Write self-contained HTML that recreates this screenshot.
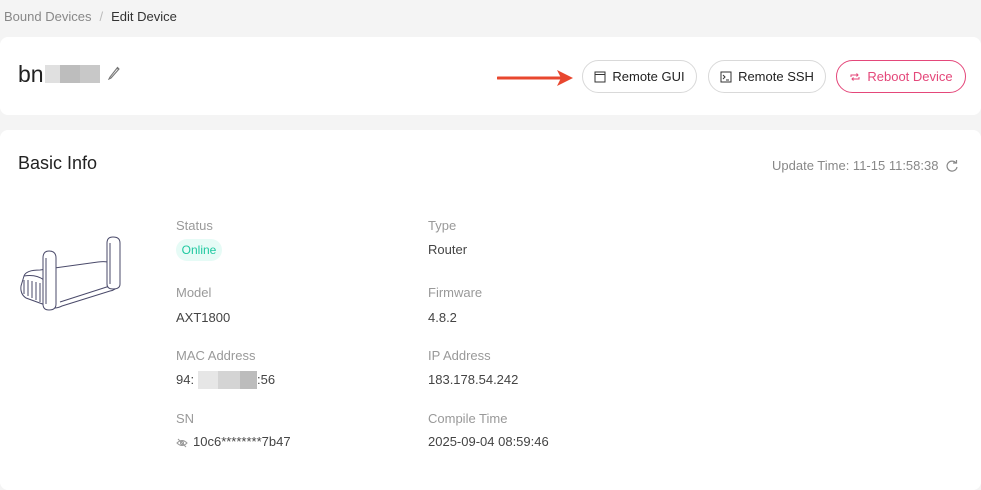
<!DOCTYPE html>
<html><head><meta charset="utf-8"><style>
*{box-sizing:border-box;margin:0;padding:0}
body{width:981px;height:473px;background:#f4f4f4;font-family:"Liberation Sans",sans-serif;position:relative;overflow:hidden;color:#333}
.bc{position:absolute;top:9px;left:4px;font-size:13px;color:#888}
.bc b{font-weight:normal;color:#333}
.bc i{font-style:normal;color:#bbb;margin:0 8px}
.c1{position:absolute;left:0;top:37px;width:981px;height:78px;background:#fff;border-radius:8px}
.c2{position:absolute;left:0;top:130px;width:981px;height:360px;background:#fff;border-radius:8px}
.abs{position:absolute}
.btn{position:absolute;top:60px;height:33px;border:1px solid #d9d9d9;border-radius:17px;font-size:13px;color:#222;display:flex;align-items:center;justify-content:center;gap:6px;background:#fff}
.lbl{position:absolute;font-size:13px;color:#999}
.val{position:absolute;font-size:13px;color:#444}
.blk{position:absolute;height:18px}
</style></head><body>
<div class="bc">Bound Devices<i>/</i><b>Edit Device</b></div>
<div class="c1"></div>
<div class="abs" style="left:18px;top:61px;font-size:23px;color:#222">bn</div>
<div class="blk" style="left:45px;top:65px;width:15px;background:#e0e0e0"></div>
<div class="blk" style="left:60px;top:65px;width:20px;background:#bdbdbd"></div>
<div class="blk" style="left:80px;top:65px;width:20px;background:#c8c8c8"></div>
<svg class="abs" style="left:107px;top:64px" width="14" height="16" viewBox="0 0 14 16"><path d="M3 13 L2 15 L4 14 L12 5 L10.5 3.5 Z M10 4 L11.5 5.5" fill="none" stroke="#777" stroke-width="1.1"/></svg>
<svg class="abs" style="left:497px;top:68px" width="80" height="20"><path d="M1 10 H66" stroke="#e8472f" stroke-width="3" stroke-linecap="round"/><path d="M60 2 L76 10 L60 18 L64 10 Z" fill="#e8472f"/></svg>
<div class="btn" style="left:582px;width:115px"><svg width="12" height="12"><rect x="1" y="1" width="10" height="10" fill="none" stroke="#333"/><path d="M1 3.5 H11" stroke="#333"/></svg>Remote GUI</div>
<div class="btn" style="left:708px;width:118px"><svg width="12" height="12"><rect x="1" y="1" width="10" height="10" fill="none" stroke="#333"/><path d="M3 4 L5 6 L3 8 M6 9 H9" stroke="#333" fill="none"/></svg>Remote SSH</div>
<div class="btn" style="left:836px;width:130px;border-color:#e4477a;color:#e4477a"><svg width="12" height="12" viewBox="0 0 12 12"><path d="M2 6 V4 H9 M7.5 2.5 L9 4 L7.5 5.5 M10 6 V8 H3 M4.5 9.5 L3 8 L4.5 6.5" fill="none" stroke="#e4477a"/></svg>Reboot Device</div>
<div class="c2"></div>
<div class="abs" style="left:18px;top:153px;font-size:18px;color:#222">Basic Info</div>
<div class="abs" style="left:772px;top:158px;font-size:13px;color:#888">Update Time: 11-15 11:58:38</div>
<svg class="abs" style="left:945px;top:159px" width="14" height="14" viewBox="0 0 14 14"><path d="M11 4 A5 5 0 1 0 12 8" fill="none" stroke="#888" stroke-width="1.2"/><path d="M8 4 H11.5 V1" fill="none" stroke="#888" stroke-width="1.2"/></svg>
<svg class="abs" style="left:0;top:230px" width="130" height="90" viewBox="0 230 130 90" fill="#fff" stroke="#4a4a6a" stroke-width="1">
<path d="M24 276 Q26 270 40 270 L98 262 Q112 260 116 268 Q120 280 117 286 Q116 290 110 291 L62 306 Q54 310 48 306 L26 298 Q20 294 21 286 Z"/>
<path d="M24 276 Q36 274 44 280 L46 306"/>
<path d="M24 280 L24 294 M28 280 L28 296 M32 281 L32 298 M36 282 L36 300 M40 283 L40 302"/>
<path d="M60 302 L116 284"/>
<path d="M107 243 Q107 237 113 237 Q120 237 120 243 L120 284 Q120 289 113 289 Q107 289 107 284 Z"/>
<path d="M43 258 Q43 251 49 251 Q56 251 56 258 L56 304 Q56 310 49 310 Q43 310 43 304 Z"/>
<path d="M46 258 L46 304 M110 243 L110 284"/>
</svg>
<div class="lbl" style="left:176px;top:218px">Status</div>
<div class="abs" style="left:176px;top:239px;width:46px;height:22px;border-radius:11px;background:#e6fbf6;color:#1ec8a0;font-size:12px;text-align:center;line-height:22px">Online</div>
<div class="lbl" style="left:176px;top:285px">Model</div>
<div class="val" style="left:176px;top:310px">AXT1800</div>
<div class="lbl" style="left:176px;top:348px">MAC Address</div>
<div class="val" style="left:176px;top:372px">94:</div>
<div class="blk" style="left:198px;top:371px;width:20px;background:#e6e6e6"></div>
<div class="blk" style="left:218px;top:371px;width:22px;background:#d4d4d4"></div>
<div class="blk" style="left:240px;top:371px;width:17px;background:#bcbcbc"></div>
<div class="val" style="left:257px;top:372px">:56</div>
<div class="lbl" style="left:176px;top:411px">SN</div>
<svg class="abs" style="left:176px;top:437px" width="12" height="12" viewBox="0 0 12 12"><path d="M1 6 Q6 1 11 6 Q6 11 1 6 Z M2 2 L10 10" fill="none" stroke="#999"/><circle cx="6" cy="6" r="1.5" fill="none" stroke="#999"/></svg>
<div class="val" style="left:193px;top:434px">10c6********7b47</div>
<div class="lbl" style="left:428px;top:218px">Type</div>
<div class="val" style="left:428px;top:242px">Router</div>
<div class="lbl" style="left:428px;top:285px">Firmware</div>
<div class="val" style="left:428px;top:310px">4.8.2</div>
<div class="lbl" style="left:428px;top:348px">IP Address</div>
<div class="val" style="left:428px;top:372px">183.178.54.242</div>
<div class="lbl" style="left:428px;top:411px">Compile Time</div>
<div class="val" style="left:428px;top:434px">2025-09-04 08:59:46</div>
</body></html>
